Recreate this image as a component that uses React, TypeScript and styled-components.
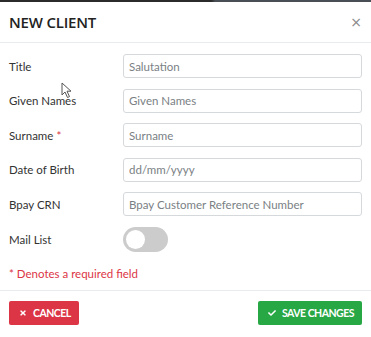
import React, { useState } from "react";
import styled, { createGlobalStyle } from "styled-components";
import { FaTimes, FaCheck } from "react-icons/fa";

const GlobalStyle = createGlobalStyle`
  html, body {
    margin: 0;
    padding: 0;
    background: #ffffff;
    font-family: Lato, "Open Sans", sans-serif;
  }
`;

const Modal = styled.div`
  position: relative;
  width: 371px;
  height: 337px;
  background: #fff;
  display: flex;
  flex-direction: column;
  overflow: hidden;
`;

const TopStrip = styled.div`
  height: 2px;
  background: linear-gradient(90deg, #2b2b2b 0%, #2b2b2b 57%, #4a4f55 58%, #4a4f55 100%);
`;

const Header = styled.div`
  height: 40px;
  display: flex;
  align-items: center;
  justify-content: space-between;
  padding: 0 6px 0 9px;
  border-bottom: 1px solid #e9ecef;
`;

const Title = styled.h2`
  margin: 0;
  font-family: "Open Sans", sans-serif;
  font-size: 15px;
  font-weight: 600;
  color: #222;
  letter-spacing: -0.2px;
`;

const CloseButton = styled.button`
  background: none;
  border: none;
  padding: 0 3px;
  color: #888;
  font-size: 14px;
  line-height: 1;
  cursor: pointer;
  font-family: "DejaVu Sans", sans-serif;
`;

const Body = styled.div`
  padding: 11px 9px 0;
  display: flex;
  flex-direction: column;
  gap: 10.6px;
`;

const Row = styled.div<{ $tall?: boolean }>`
  display: grid;
  grid-template-columns: 114px 1fr;
  align-items: center;
  height: ${(p) => (p.$tall ? "25px" : "24px")};
`;

const Label = styled.label`
  font-size: 11.5px;
  color: #333;
`;

const Star = styled.span`
  color: #dc3545;
  margin-left: 3px;
`;

const Input = styled.input`
  box-sizing: border-box;
  height: 24px;
  width: 100%;
  border: 1px solid #d6d9dc;
  border-radius: 3px;
  padding: 0 5px;
  font-family: Lato, "Open Sans", sans-serif;
  font-size: 11.5px;
  color: #333;
  outline: none;

  &::placeholder {
    color: #7a7f84;
  }
`;

const Toggle = styled.button<{ $on: boolean }>`
  position: relative;
  display: block;
  width: 45px;
  height: 25px;
  border: none;
  border-radius: 13px;
  padding: 0;
  background: ${(p) => (p.$on ? "#28a745" : "#cccccc")};
  cursor: pointer;

  &::after {
    content: "";
    position: absolute;
    top: 3px;
    left: ${(p) => (p.$on ? "23px" : "3px")};
    width: 19px;
    height: 19px;
    border-radius: 50%;
    background: #fff;
  }
`;

const Required = styled.div`
  margin-top: 4px;
  font-size: 11.5px;
  color: #dc3545;
`;

const Footer = styled.div`
  margin-top: auto;
  height: 44px;
  border-top: 1px solid #e9ecef;
  display: flex;
  align-items: center;
  justify-content: space-between;
  padding: 0 9px 2px;
`;

const ActionButton = styled.button<{ $tone: "danger" | "success" }>`
  height: 24px;
  display: flex;
  align-items: center;
  gap: 6px;
  padding: 0 8px 0 10px;
  border: none;
  border-radius: 2px;
  background: ${(p) => (p.$tone === "danger" ? "#dc3545" : "#28a745")};
  color: #fff;
  font-family: Lato, "Open Sans", sans-serif;
  font-size: 10.5px;
  font-weight: 700;
  letter-spacing: -0.5px;
  cursor: pointer;

  svg {
    width: 8px;
    height: 8px;
  }
`;

const Cursor = styled.svg`
  position: absolute;
  left: 61px;
  top: 82px;
  pointer-events: none;
`;

export default function App(): JSX.Element {
  const [mailList, setMailList] = useState<boolean>(false);

  return (
    <>
      <GlobalStyle />
      <Modal>
        <TopStrip />
        <Header>
          <Title>NEW CLIENT</Title>
          <CloseButton>×</CloseButton>
        </Header>
        <Body>
          <Row>
            <Label>Title</Label>
            <Input placeholder="Salutation" />
          </Row>
          <Row>
            <Label>Given Names</Label>
            <Input placeholder="Given Names" />
          </Row>
          <Row>
            <Label>
              Surname<Star>*</Star>
            </Label>
            <Input placeholder="Surname" />
          </Row>
          <Row>
            <Label>Date of Birth</Label>
            <Input placeholder="dd/mm/yyyy" />
          </Row>
          <Row>
            <Label>Bpay CRN</Label>
            <Input placeholder="Bpay Customer Reference Number" />
          </Row>
          <Row $tall>
            <Label>Mail List</Label>
            <div>
              <Toggle $on={mailList} onClick={() => setMailList(!mailList)} />
            </div>
          </Row>
          <Required>* Denotes a required field</Required>
        </Body>
        <Footer>
          <ActionButton $tone="danger">
            <FaTimes />
            CANCEL
          </ActionButton>
          <ActionButton $tone="success">
            <FaCheck />
            SAVE CHANGES
          </ActionButton>
        </Footer>
        <Cursor width="12" height="17" viewBox="0 0 12 17">
          <path d="M1 1 L1 13 L4 10 L6.5 15.5 L8.5 14.6 L6 9.2 L10 9.2 Z" fill="#fff" stroke="#555" strokeWidth="1" strokeLinejoin="round" />
        </Cursor>
      </Modal>
    </>
  );
}
